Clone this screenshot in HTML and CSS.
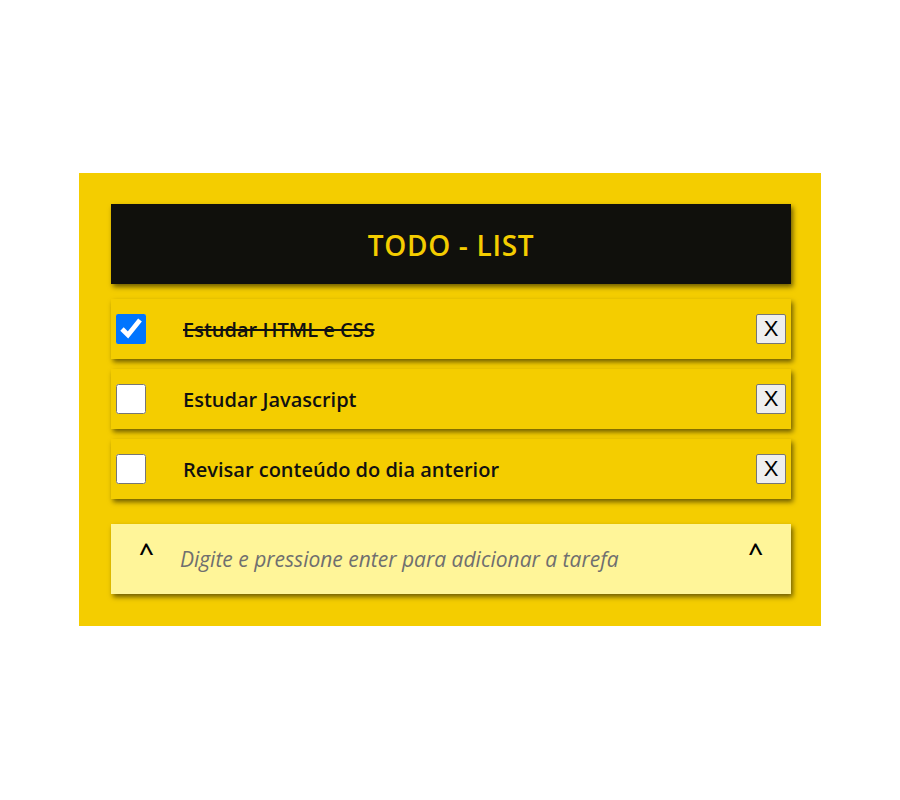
FILE: index.html
```html
<!DOCTYPE html>
<html lang="pt-BR">
<head>
<meta charset="utf-8">
<title>TODO - LIST</title>
<link rel="stylesheet" href="styles.css">
</head>
<body>
<main class="board">
  <header class="board-header">
    <h1 class="title">TODO - LIST</h1>
  </header>
  <ul class="tasks">
    <li class="task done">
      <input class="task-check" type="checkbox" checked>
      <span class="task-text">Estudar HTML e CSS</span>
      <button class="task-remove" type="button">X</button>
    </li>
    <li class="task">
      <input class="task-check" type="checkbox">
      <span class="task-text">Estudar Javascript</span>
      <button class="task-remove" type="button">X</button>
    </li>
    <li class="task">
      <input class="task-check" type="checkbox">
      <span class="task-text">Revisar conteúdo do dia anterior</span>
      <button class="task-remove" type="button">X</button>
    </li>
  </ul>
  <div class="new-task">
    <span class="caret">^</span>
    <input class="new-input" type="text" placeholder="Digite e pressione enter para adicionar a tarefa">
    <span class="caret">^</span>
  </div>
</main>
</body>
</html>
```
FILE: styles.css
```css
html, body {
  margin: 0;
  padding: 0;
  background: #ffffff;
}

body {
  font-family: "Open Sans", "Noto Sans", sans-serif;
  padding-top: 173px;
}

.board {
  box-sizing: border-box;
  width: 742px;
  margin: 0 auto;
  padding: 31px 30px 32px 32px;
  background: #f4cd00;
}

.board-header {
  height: 80px;
  background: #10100c;
  box-shadow: 2px 3px 5px rgba(0, 0, 0, 0.55);
  display: flex;
  align-items: center;
  justify-content: center;
}

.title {
  margin: 0;
  padding-top: 1px;
  color: #f4cd00;
  font-size: 28px;
  font-weight: 600;
  letter-spacing: 0.7px;
}

.tasks {
  list-style: none;
  margin: 15px 0 0;
  padding: 0;
  display: flex;
  flex-direction: column;
  gap: 10px;
}

.task {
  height: 60px;
  box-sizing: border-box;
  padding: 0 5px;
  display: flex;
  align-items: center;
  background: #f4cd00;
  box-shadow: 2px 3px 5px rgba(0, 0, 0, 0.55);
}

.task-check {
  width: 30px;
  height: 30px;
  margin: 0;
  accent-color: #0075ff;
}

.task-text {
  margin-left: 37px;
  font-size: 20px;
  font-weight: 600;
  color: #111;
}

.done .task-text {
  text-decoration: line-through;
}

.task-remove {
  margin-left: auto;
  width: 30px;
  height: 30px;
  padding: 0;
  font-family: "Liberation Sans", Arial, sans-serif;
  font-size: 22px;
  color: #000;
  background: #efefef;
  border: 1px solid #767676;
  border-radius: 2px;
}

.new-task {
  margin-top: 25px;
  height: 70px;
  box-sizing: border-box;
  padding: 0 28px;
  display: flex;
  align-items: center;
  background: #fff599;
  box-shadow: 2px 3px 5px rgba(0, 0, 0, 0.55);
}

.caret {
  font-size: 26px;
  font-weight: 600;
  color: #000;
  margin-bottom: 14px;
}

.new-input {
  flex: 1;
  margin: 0 0 0 26px;
  padding: 0;
  border: none;
  background: transparent;
  font-family: "Open Sans", "Noto Sans", sans-serif;
  font-size: 21px;
  font-style: italic;
  outline: none;
}

.new-input::placeholder {
  color: #6f6f6f;
  font-style: italic;
}
```
